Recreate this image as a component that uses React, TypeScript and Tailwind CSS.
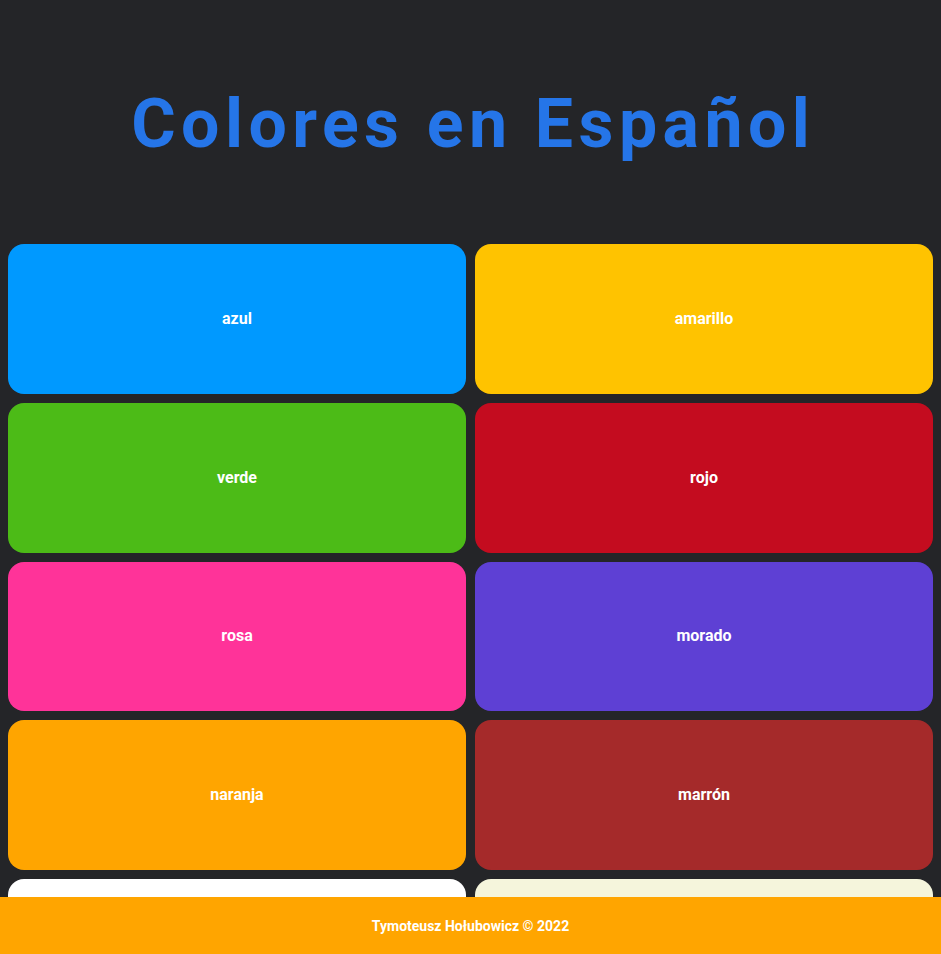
const colors = [
  { name: "azul", bg: "bg-[#0099ff]", text: "text-white" },
  { name: "amarillo", bg: "bg-[#ffc300]", text: "text-white" },
  { name: "verde", bg: "bg-[#4cbb17]", text: "text-white" },
  { name: "rojo", bg: "bg-[#c40c1f]", text: "text-white" },
  { name: "rosa", bg: "bg-[#ff3399]", text: "text-white" },
  { name: "morado", bg: "bg-[#5e40d4]", text: "text-white" },
  { name: "naranja", bg: "bg-[#ffa500]", text: "text-white" },
  { name: "marrón", bg: "bg-[#a52a2a]", text: "text-white" },
  { name: "blanco", bg: "bg-white", text: "text-black" },
  { name: "beige", bg: "bg-[#f5f5dc]", text: "text-black" },
  { name: "negro", bg: "bg-black", text: "text-white" },
  { name: "gris", bg: "bg-[#808080]", text: "text-white" },
];

const App = () => {
  return (
    <div className="min-h-screen bg-[#242528] pb-[57px] font-['Roboto',sans-serif]">
      <div className="h-[236px] pt-3 flex items-center justify-center">
        <h1 className="text-[68px] font-bold tracking-[0.08em] text-[#2575e8] leading-none pl-[0.08em]">
          Colores en Español
        </h1>
      </div>
      <div className="grid grid-cols-2 gap-[9px] px-2 pt-2 pb-4">
        {colors.map((c) => (
          <div
            key={c.name}
            className={`${c.bg} ${c.text} h-[149.75px] rounded-2xl flex items-center justify-center text-base font-bold`}
          >
            {c.name}
          </div>
        ))}
      </div>
      <div className="fixed bottom-0 left-0 right-0 h-[57px] bg-[#ffa500] flex items-center justify-center text-white text-sm font-bold">
        Tymoteusz Hołubowicz © 2022
      </div>
    </div>
  );
};

export default App;
